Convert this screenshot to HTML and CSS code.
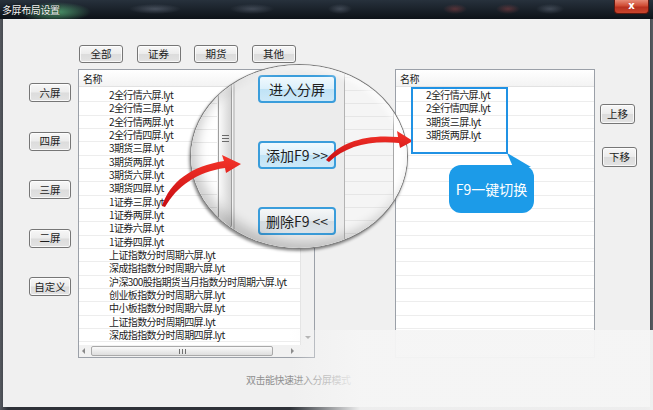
FILE: index.html
```html
<!DOCTYPE html>
<html lang="zh-CN">
  <head>
    <meta charset="UTF-8" />
    <meta name="viewport" content="width=device-width, initial-scale=1.0" />
    <link rel="stylesheet" href="styles.css">
  </head>
  <body>
    <div class="window">
      <div class="titlebar">
        <span class="title">多屏布局设置</span>
        <div class="close">x</div>
      </div>

      <div class="content">
        <div class="filters">
          <div class="btn">全部</div>
          <div class="btn">证券</div>
          <div class="btn">期货</div>
          <div class="btn">其他</div>
        </div>

        <div class="main">
          <div class="side">
            <div class="btn">六屏</div>
            <div class="btn">四屏</div>
            <div class="btn">三屏</div>
            <div class="btn">二屏</div>
            <div class="btn">自定义</div>
          </div>

          <div class="list list-left">
            <div class="list-head">名称</div>
            <div class="vscroll">
              <i class="tri tri-up"></i>
              <i class="tri tri-down"></i>
            </div>
            <ul class="rows">
              <li>2全行情六屏.lyt</li>
              <li>2全行情三屏.lyt</li>
              <li>2全行情两屏.lyt</li>
              <li>2全行情四屏.lyt</li>
              <li>3期货三屏.lyt</li>
              <li>3期货两屏.lyt</li>
              <li>3期货六屏.lyt</li>
              <li>3期货四屏.lyt</li>
              <li>1证券三屏.lyt</li>
              <li>1证券两屏.lyt</li>
              <li>1证券六屏.lyt</li>
              <li>1证券四屏.lyt</li>
              <li>上证指数分时周期六屏.lyt</li>
              <li>深成指指数分时周期六屏.lyt</li>
              <li>沪深300股指期货当月指数分时周期六屏.lyt</li>
              <li>创业板指数分时周期六屏.lyt</li>
              <li>中小板指数分时周期六屏.lyt</li>
              <li>上证指数分时周期四屏.lyt</li>
              <li>深成指指数分时周期四屏.lyt</li>
            </ul>
            <div class="hscroll">
              <i class="tri tri-left"></i>
              <div class="hthumb"><div class="hgrip"></div></div>
              <i class="tri tri-right"></i>
            </div>
            <div class="corner"></div>
          </div>

          <div class="middle"></div>

          <div class="list list-right">
            <div class="list-head">名称</div>
            <ul class="rows">
              <li>2全行情六屏.lyt</li>
              <li>2全行情四屏.lyt</li>
              <li>3期货三屏.lyt</li>
              <li>3期货两屏.lyt</li>
              <li></li><li></li><li></li><li></li>
              <li></li><li></li><li></li><li></li>
              <li></li><li></li><li></li><li></li>
              <li></li><li></li><li></li><li></li>
            </ul>
          </div>

          <div class="order">
            <div class="btn">上移</div>
            <div class="btn btn-down">下移</div>
          </div>
        </div>

        <div class="hint">双击能快速进入分屏模式</div>
      </div>

      <!-- overlays drawn on top of the dialog -->
      <div class="bottom-fade"></div>

      <div class="lens">
        <div class="lens-list"></div>
        <div class="lens-scroll">
          <div class="lens-thumb"><div class="lens-grip"></div></div>
        </div>
        <div class="lens-panel">
          <div class="lens-btn">进入分屏</div>
          <div class="lens-btn">添加F9 &gt;&gt;</div>
          <div class="lens-btn lens-btn-gray">删除F9 &lt;&lt;</div>
        </div>
        <div class="lens-side"></div>
        <div class="lens-rlist"></div>
      </div>

      <svg class="arrows" width="653" height="410" viewBox="0 0 653 410">
        <defs>
          <linearGradient id="red" x1="0" y1="0" x2="0" y2="1">
            <stop offset="0" stop-color="#f5352a" />
            <stop offset="1" stop-color="#c80d12" />
          </linearGradient>
        </defs>
        <path
          d="M162,206 C170,182 191,166 224,161 L222,155 L241,164 L226,173 L225,168 C197,172 177,186 165,207 Z"
          fill="url(#red)"
        />
        <path
          d="M326,160 C340,142 366,134 398,137 L397,131 L413,141 L400,148 L399,143 C370,140 346,146 329,162 Z"
          fill="url(#red)"
        />
      </svg>

      <div class="highlight"></div>
      <div class="bubble">F9一键切换</div>
    </div>
  </body>
</html>
```

FILE: styles.css
```css
* {
  box-sizing: border-box;
}

body {
  margin: 0;
  width: 653px;
  height: 410px;
  overflow: hidden;
  background-color: #2c3036;
  font-family: "Noto Sans CJK SC", "Noto Sans", sans-serif;
  color: #1c1c1c;
}

.window {
  position: relative;
  width: 653px;
  height: 410px;
  display: flex;
  flex-direction: column;
  background: linear-gradient(to right, #55595f, #2e3238 8px, #2e3238 645px, #5a5e64);
}

/* title bar */
.titlebar {
  position: relative;
  height: 19px;
  flex: none;
  display: flex;
  align-items: center;
  padding-left: 2px;
  background:
    radial-gradient(36px 10px at 55px 12px, rgba(90, 185, 125, 0.8), transparent),
    radial-gradient(26px 5px at 155px 9px, rgba(150, 160, 180, 0.35), transparent),
    radial-gradient(22px 5px at 252px 9px, rgba(150, 160, 180, 0.3), transparent),
    radial-gradient(12px 5px at 340px 9px, rgba(150, 160, 180, 0.3), transparent),
    radial-gradient(12px 5px at 455px 9px, rgba(200, 80, 80, 0.35), transparent),
    radial-gradient(12px 5px at 508px 9px, rgba(200, 80, 80, 0.35), transparent),
    radial-gradient(14px 5px at 550px 9px, rgba(150, 160, 180, 0.3), transparent),
    linear-gradient(#27313c, #0d1218);
}

.title {
  font-size: 10px;
  line-height: 12px;
  letter-spacing: -0.4px;
  color: #f2f2f2;
  text-shadow: 0 0 2px #000;
}

.close {
  position: absolute;
  top: 0;
  right: 4px;
  width: 35px;
  height: 14px;
  border: 1px solid #5e1810;
  border-top: none;
  border-radius: 0 0 4px 4px;
  background: linear-gradient(#e68a76, #cf4b33 45%, #b8311f 55%, #c9452d);
  color: #fff;
  font-family: "DejaVu Sans", sans-serif;
  font-size: 10px;
  font-weight: bold;
  line-height: 12px;
  text-align: center;
}

/* dialog body */
.content {
  flex: 1;
  margin: 0 3px 3px;
  padding-top: 26px;
  background-color: #f0f0f0;
  display: flex;
  flex-direction: column;
}

.btn {
  width: 44px;
  height: 18px;
  flex: none;
  display: flex;
  align-items: center;
  justify-content: center;
  border: 1px solid #767676;
  border-radius: 3px;
  background: linear-gradient(#f7f7f7, #ececec 48%, #dcdcdc 52%, #e3e3e3);
  box-shadow: inset 0 0 0 1px rgba(255, 255, 255, 0.75);
  font-size: 10.5px;
  line-height: 12px;
}

.filters {
  display: flex;
  gap: 13.5px;
  padding-left: 76px;
}

.main {
  display: flex;
  height: 289px;
  margin-top: 6px;
}

.side {
  width: 75px;
  flex: none;
  display: flex;
  flex-direction: column;
  gap: 29.5px;
  padding: 14px 0 0 26px;
}

.side .btn {
  width: 42px;
  height: 19px;
}

/* list views */
.list {
  height: 289px;
  flex: none;
  border: 1px solid #9ba0a8;
  background-color: #fff;
}

.list-left {
  width: 237px;
  display: grid;
  grid-template-columns: 1fr 14px;
  grid-template-rows: 17px 1fr 12px;
}

.list-right {
  width: 200px;
  display: flex;
  flex-direction: column;
}

.list-head {
  height: 17px;
  flex: none;
  padding-left: 4px;
  font-size: 10px;
  line-height: 17px;
  letter-spacing: -0.4px;
  background: linear-gradient(#ffffff, #f3f3f3);
  border-bottom: 1px solid #e2e2e2;
}

.rows {
  margin: 0;
  padding: 2px 0 0;
  list-style: none;
  overflow: hidden;
}

.rows li {
  height: 13.33px;
  padding-left: 30px;
  border-bottom: 1px solid #ededed;
  font-size: 10px;
  line-height: 12.33px;
  letter-spacing: -0.6px;
  white-space: nowrap;
}

/* little scroll arrows */
.tri {
  width: 0;
  height: 0;
  border: 3px solid transparent;
}

.tri-up {
  border-bottom-color: #a0a0a0;
  border-top-width: 0;
}

.tri-down {
  border-top-color: #a0a0a0;
  border-bottom-width: 0;
}

.tri-left {
  margin: 0 4px 0 3px;
  border-right-color: #8a8a8a;
  border-left-width: 0;
}

.tri-right {
  margin: 0 6px 0 auto;
  border-left-color: #8a8a8a;
  border-right-width: 0;
}

.vscroll {
  grid-column: 2;
  grid-row: 1 / 3;
  display: flex;
  flex-direction: column;
  justify-content: space-between;
  align-items: center;
  padding: 5px 0 6px;
  background-color: #f1f1f1;
  border-left: 1px solid #e4e4e4;
}

.hscroll {
  grid-column: 1;
  grid-row: 3;
  display: flex;
  align-items: center;
  background-color: #f1f1f1;
}

.hthumb {
  width: 182px;
  height: 10px;
  margin-left: 2px;
  display: flex;
  align-items: center;
  justify-content: center;
  border: 1px solid #a9a9a9;
  border-radius: 2px;
  background: linear-gradient(#fafafa, #dedede);
}

.hgrip {
  width: 7px;
  height: 5px;
  background: repeating-linear-gradient(to right, #707070 0 1px, transparent 1px 3px);
}

.corner {
  grid-column: 2;
  grid-row: 3;
  background-color: #f1f1f1;
}

.middle {
  width: 80px;
  flex: none;
}

.order {
  display: flex;
  flex-direction: column;
  gap: 23px;
  padding: 35px 0 0 5px;
}

.order .btn {
  width: 35px;
  height: 20px;
}

.order .btn-down {
  margin-left: 2px;
}

.hint {
  margin-top: 16px;
  padding-left: 243px;
  font-size: 10px;
  line-height: 12px;
  letter-spacing: -0.5px;
  color: #8f8f8f;
}

/* overlays */
.bottom-fade {
  position: absolute;
  left: 290px;
  top: 330px;
  right: 0;
  bottom: 0;
  background: linear-gradient(to right, rgba(245, 245, 245, 0), rgba(245, 245, 245, 0.96) 70px);
}

.lens {
  position: absolute;
  left: 190px;
  top: 64px;
  width: 218px;
  height: 185px;
  display: flex;
  overflow: hidden;
  border: 1px solid #7c7c7c;
  border-radius: 50%;
  background-color: #ececec;
  box-shadow: -1px 2px 3px rgba(0, 0, 0, 0.45);
}

.lens::after {
  content: "";
  position: absolute;
  inset: 0;
  border-radius: 50%;
  box-shadow: inset 6px -6px 12px rgba(0, 0, 0, 0.2), inset -3px 3px 6px rgba(255, 255, 255, 0.8);
}

.lens-list {
  width: 26px;
  flex: none;
  background: repeating-linear-gradient(#ffffff 0 12px, #ebebeb 12px 13px);
}

.lens-scroll {
  width: 16px;
  flex: none;
  padding: 15px 1px 0;
  background-color: #f3f3f3;
}

.lens-thumb {
  height: 148px;
  border: 1px solid #9e9e9e;
  border-radius: 3px;
  background: linear-gradient(to right, #fafafa, #d4d4d4);
}

.lens-grip {
  width: 7px;
  height: 7px;
  margin: 54px auto 0;
  background: repeating-linear-gradient(#6a6a6a 0 1px, transparent 1px 3px);
}

.lens-panel {
  width: 112px;
  flex: none;
  display: flex;
  flex-direction: column;
  gap: 38px;
  padding: 10px 0 0 23px;
  border-left: 2px solid #cdcdcd;
  border-right: 1px solid #b3b3b3;
  background-color: #ececec;
}

.lens-btn {
  width: 78px;
  height: 28px;
  flex: none;
  display: flex;
  align-items: center;
  justify-content: center;
  border: 2px solid #3a9ddb;
  border-radius: 4px;
  background: linear-gradient(#f0f9fe, #dcf0fb 48%, #c0e3f6 52%, #cde9f8);
  font-size: 14px;
  line-height: 16px;
  color: #1e1e1e;
}

.lens-btn-gray {
  background: linear-gradient(#f5f7f8, #e6ebee 48%, #d4dce1 52%, #dde4e9);
}

.lens-side {
  width: 48px;
  flex: none;
  background: repeating-linear-gradient(#f5f5f5 0 12px, #e6e6e6 12px 13px);
}

.lens-rlist {
  flex: 1;
  border-left: 1px solid #a8a8a8;
  background-color: #fff;
}

.arrows {
  position: absolute;
  left: 0;
  top: 0;
}

.highlight {
  position: absolute;
  left: 411px;
  top: 87px;
  width: 97px;
  height: 67px;
  border: 2px solid #2092e4;
}

.bubble {
  position: absolute;
  left: 449px;
  top: 165px;
  width: 85px;
  height: 48px;
  display: flex;
  align-items: center;
  justify-content: center;
  border-radius: 12px;
  background-color: #1c9be8;
  color: #fff;
  font-size: 14px;
  line-height: 16px;
}

.bubble::before {
  content: "";
  position: absolute;
  left: 58px;
  top: -12px;
  width: 24px;
  height: 14px;
  background-color: #1c9be8;
  clip-path: polygon(0 0, 6px 14px, 24px 14px);
}
```
